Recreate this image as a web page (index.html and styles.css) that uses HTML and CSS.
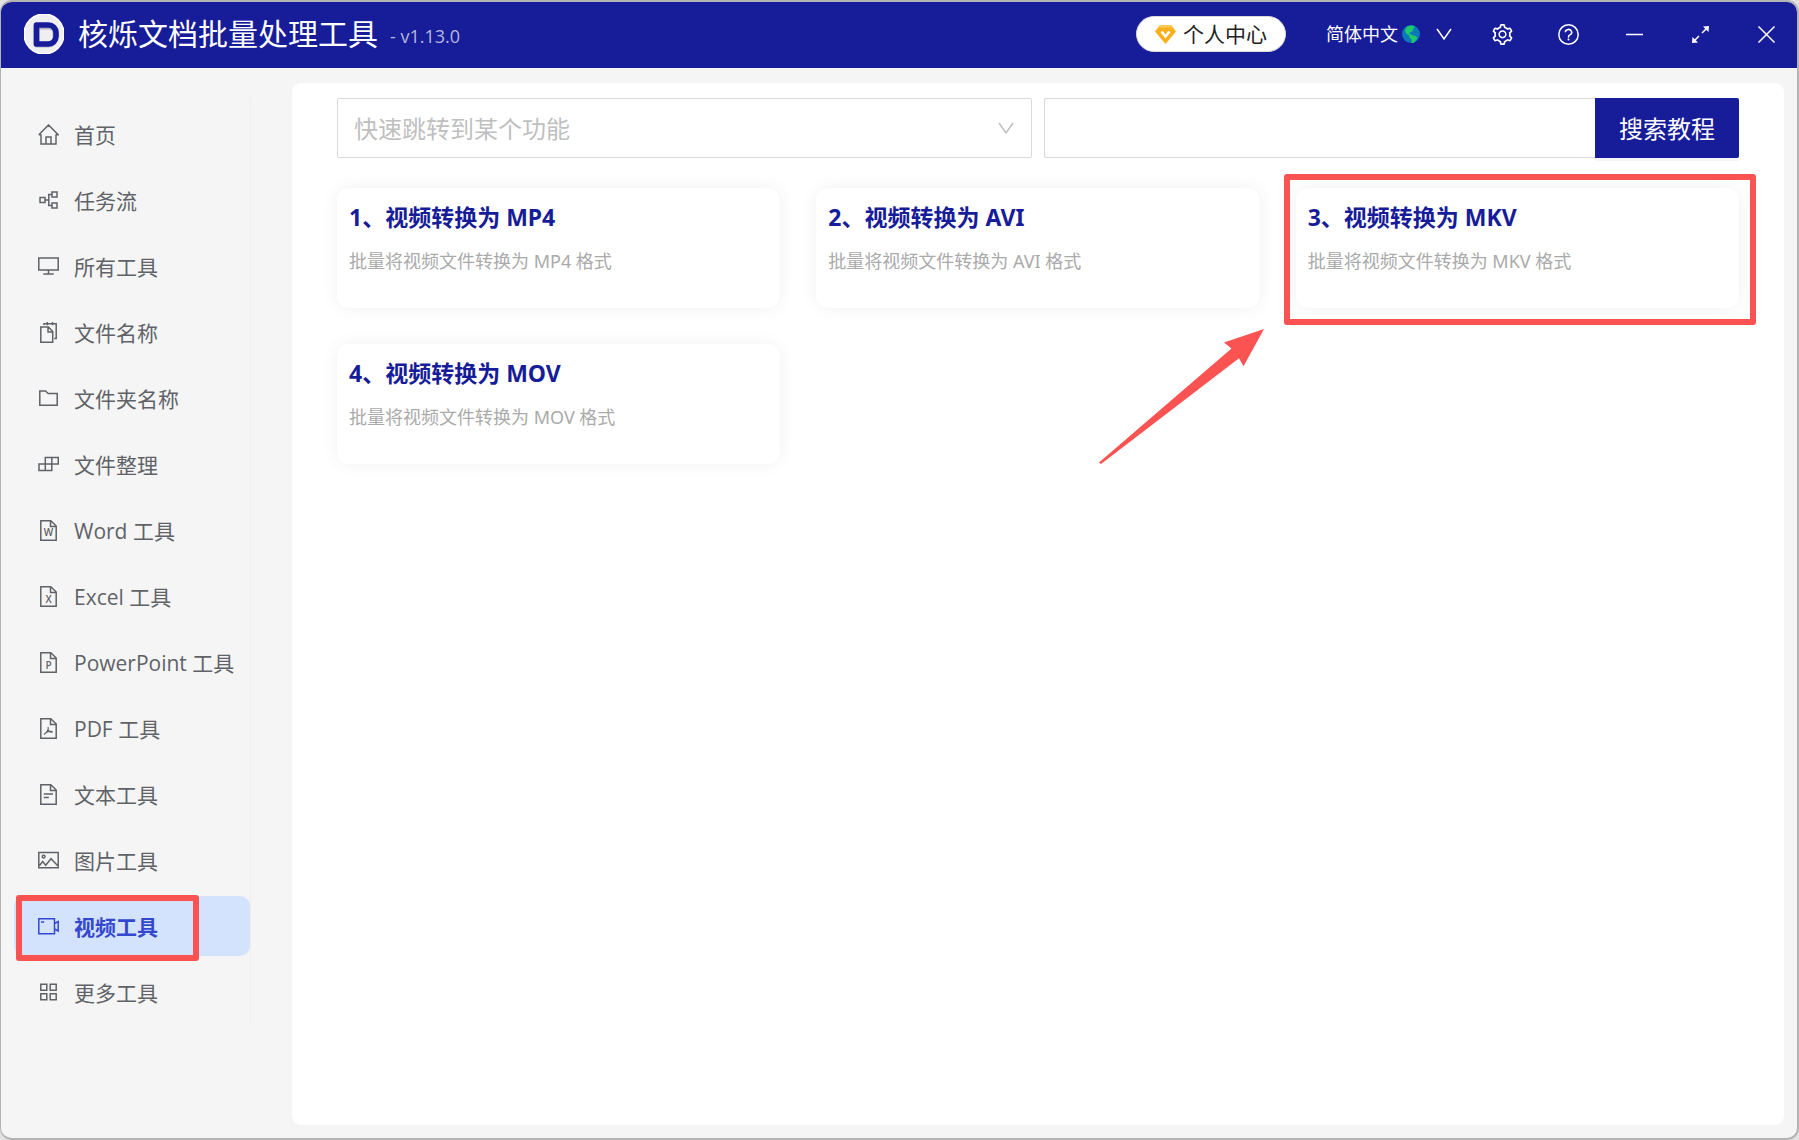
FILE: index.html
```html
<!DOCTYPE html>
<html lang="zh-CN">

<head>
    <meta charset="utf-8">
    <meta name="viewport" content="width=device-width, initial-scale=1">
    <title>核烁文档批量处理工具</title>
    <link rel="stylesheet" href="styles.css">
</head>

<body>
    <div class="window">
        <!-- 标题栏 -->
        <header class="titlebar">
            <svg class="logo" viewBox="0 0 40 40" aria-hidden="true">
                <circle cx="20" cy="20" r="20" fill="#efeff2" />
                <path d="M12.500 12.500h12a7 7 0 0 1 7 7v4a7 7 0 0 1-7 7h-12z" fill="none" stroke="#b4b4c0" stroke-width="6" stroke-linejoin="round" />
                <path d="M12.500 11h12a7.500 7.500 0 0 1 7.500 7.500v4a7.500 7.500 0 0 1-7.500 7.500h-12z" fill="none" stroke="#171c99" stroke-width="5.600" stroke-linejoin="round" />
            </svg>
            <h1 class="app-name">核烁文档批量处理工具</h1>
            <span class="version">- v1.13.0</span>

            <div class="tools">
                <button class="user-btn" type="button">
                    <svg width="21" height="19" viewBox="0 0 21 19" aria-hidden="true">
                        <path d="M5 0h11l5 6.500-10.500 12.500L0 6.500z" fill="#fbb01a" />
                        <path d="M5 0h11l2 2.500H3z" fill="#ffc85a" />
                        <path d="M6.500 6.500l4 5 4-5" fill="none" stroke="#fff" stroke-width="2.600" />
                    </svg>
                    个人中心
                </button>
                <button class="lang-btn" type="button">
                    简体中文
                    <svg class="globe" width="18" height="18" viewBox="0 0 18 18" aria-hidden="true">
                        <circle cx="9" cy="9" r="9" fill="#0b78b8" />
                        <path d="M5 1.500l4-1 3 .5.500 2-2 1.500.5 1.500-3 1.500-1 1 3 1.500 3.500 1 2 2-2 3-2.500 2.500-1.500-1 0-3-2-2-.5-2-3-2-1-3z" fill="#1fc96b" />
                    </svg>
                    <svg class="down" width="16" height="16" viewBox="0 0 16 16" aria-hidden="true">
                        <path d="M1 3l7 10 7-10" />
                    </svg>
                </button>
                <button class="icon-btn" type="button" aria-label="设置">
                    <svg viewBox="64 64 896 896">
                        <path class="solid" d="M924.8 625.7l-65.5-56c3.1-19 4.7-38.4 4.7-57.8s-1.6-38.8-4.7-57.8l65.5-56a32.03 32.03 0 009.3-35.2l-.9-2.6a443.74 443.74 0 00-79.7-137.9l-1.8-2.1a32.12 32.12 0 00-35.1-9.5l-81.3 28.9c-30-24.6-63.5-44-99.7-57.6l-15.7-85a32.05 32.05 0 00-25.8-25.7l-2.7-.5c-52.1-9.4-106.9-9.4-159 0l-2.7.5a32.05 32.05 0 00-25.8 25.7l-15.8 85.4a351.86 351.86 0 00-99 57.4l-81.9-29.1a32 32 0 00-35.1 9.5l-1.8 2.1a446.02 446.02 0 00-79.7 137.9l-.9 2.6c-4.5 12.5-.8 26.5 9.3 35.2l66.3 56.6c-3.1 18.8-4.6 38-4.6 57.1 0 19.2 1.5 38.4 4.6 57.1L99 625.5a32.03 32.03 0 00-9.3 35.2l.9 2.6c18.1 50.4 44.9 96.9 79.7 137.9l1.8 2.1a32.12 32.12 0 0035.1 9.5l81.9-29.1c29.8 24.5 63.1 43.9 99 57.4l15.8 85.4a32.05 32.05 0 0025.8 25.7l2.7.5a449.4 449.4 0 00159 0l2.7-.5a32.05 32.05 0 0025.8-25.7l15.7-85a350 350 0 0099.7-57.6l81.3 28.9a32 32 0 0035.1-9.5l1.8-2.1c34.8-41.1 61.6-87.5 79.7-137.9l.9-2.6c4.5-12.3.8-26.3-9.3-35zM788.3 465.9c2.5 15.1 3.8 30.6 3.8 46.1s-1.3 31-3.8 46.1l-6.6 40.1 74.7 63.9a370.03 370.03 0 01-42.6 73.6L721 702.8l-31.4 25.8c-23.9 19.6-50.5 35-79.3 45.800l-38.1 14.3-17.9 97a377.5 377.5 0 01-85 0l-17.9-97.2-37.8-14.5c-28.5-10.8-55-26.2-78.7-45.7l-31.4-25.9-93.4 33.2c-17-22.9-31.2-47.6-42.6-73.6l75.5-64.5-6.5-40c-2.4-14.9-3.7-30.3-3.7-45.5 0-15.3 1.2-30.6 3.7-45.5l6.5-40-75.5-64.5c11.3-26.1 25.6-50.7 42.6-73.6l93.4 33.2 31.4-25.9c23.7-19.5 50.2-34.9 78.7-45.7l37.9-14.3 17.9-97.2c28.1-3.2 56.8-3.2 85 0l17.9 97 38.1 14.3c28.7 10.8 55.4 26.2 79.3 45.8l31.4 25.8 92.8-32.9c17 22.9 31.2 47.6 42.6 73.6L781.8 426l6.5 39.9zM512 326c-97.2 0-176 78.8-176 176s78.8 176 176 176 176-78.8 176-176-78.8-176-176-176zm79.2 255.2A111.6 111.6 0 01512 614c-29.9 0-58-11.7-79.2-32.8A111.6 111.6 0 01400 502c0-29.9 11.7-58 32.8-79.2C454 401.6 482.1 390 512 390c29.9 0 58 11.6 79.2 32.8A111.6 111.6 0 01624 502c0 29.9-11.7 58-32.8 79.2z" />
                    </svg>
                </button>
                <button class="icon-btn" type="button" aria-label="帮助">
                    <svg viewBox="0 0 21 21">
                        <circle cx="10.500" cy="10.500" r="9.700" />
                        <path d="M7.300 8.300a3.200 2.900 0 1 1 4.600 2.600q-1.400.7-1.400 2v.8" />
                        <circle class="solid" cx="10.500" cy="15.500" r="1" />
                    </svg>
                </button>
                <button class="icon-btn" type="button" aria-label="最小化">
                    <svg viewBox="0 0 21 21">
                        <path d="M2 10.500h17" />
                    </svg>
                </button>
                <button class="icon-btn" type="button" aria-label="最大化">
                    <svg viewBox="0 0 21 21">
                        <path d="M12 9l5-5M9 12l-5 5" />
                        <path class="solid" d="M13 2.500l6-.5-.5 6zM8 18.500l-6 .5.5-6z" />
                    </svg>
                </button>
                <button class="icon-btn" type="button" aria-label="关闭">
                    <svg viewBox="0 0 21 21">
                        <path d="M2.500 2.500l16 16M18.500 2.500l-16 16" />
                    </svg>
                </button>
            </div>
        </header>

        <div class="main">
            <!-- 左侧菜单 -->
            <nav class="menu">
                <a class="menu-item" href="#home">
                    <svg viewBox="0 0 21 21"><path d="M3 11v9h15v-9M.8 10.700L10.500 1l9.700 9.700H17.500M.8 10.700H3.500M8 20v-7h5v7" /></svg>
                    首页
                </a>
                <a class="menu-item" href="#flow">
                    <svg viewBox="0 0 21 21"><path d="M2 7.500h5v5H2zM14 2h5v5h-5zM14 13h5v5h-5zM7 10h4M14 4.500h-3.200v11H14" /></svg>
                    任务流
                </a>
                <a class="menu-item" href="#all">
                    <svg viewBox="0 0 21 21"><path d="M.8 2h19.400v12H.8zM10.500 14v4M5.300 18h10.400" /></svg>
                    所有工具
                </a>
                <a class="menu-item" href="#filename">
                    <svg viewBox="0 0 21 21"><path d="M2.800 5h7.700l4.200 4.500v10.700H2.800zM10 5v5h4.700M6 3V1.800h12.200v14.700h-2M9.300 0v3.200M14.500 0v3.200" /></svg>
                    文件名称
                </a>
                <a class="menu-item" href="#folder">
                    <svg viewBox="0 0 21 21"><path d="M1.800 3h5.700l2.700 2.500h9v11.700H1.800z" /></svg>
                    文件夹名称
                </a>
                <a class="menu-item" href="#organize">
                    <svg viewBox="0 0 21 21"><path d="M1 10h12.800v6.500H1zM7.300 3.500h13V10h-13zM7.300 10v6.500M13.800 3.500V10" /></svg>
                    文件整理
                </a>
                <a class="menu-item" href="#word">
                    <svg viewBox="0 0 21 21"><path d="M2.800.8h10l5.400 5.200v14.200H2.800zM12.500.8v5.700h5.700" /><text x="10.500" y="16">W</text></svg>
                    Word 工具
                </a>
                <a class="menu-item" href="#excel">
                    <svg viewBox="0 0 21 21"><path d="M2.800.8h10l5.400 5.200v14.200H2.800zM12.500.8v5.700h5.700" /><text x="10.500" y="17">X</text></svg>
                    Excel 工具
                </a>
                <a class="menu-item" href="#powerpoint">
                    <svg viewBox="0 0 21 21"><path d="M2.800.8h10l5.400 5.200v14.200H2.800zM12.500.8v5.700h5.700" /><text x="10.500" y="17">P</text></svg>
                    PowerPoint 工具
                </a>
                <a class="menu-item" href="#pdf">
                    <svg viewBox="0 0 21 21"><path d="M2.800.8h10l5.400 5.200v14.200H2.800zM12.500.8v5.700h5.700" /><path class="thin" d="M9.800 9c1.200 1 .2 4.500-3.800 7.500M10 11.500c.8 2 2.500 3 4.800 2.500M7.500 15c1.500-1.200 4-1.800 6.800-1.500" /></svg>
                    PDF 工具
                </a>
                <a class="menu-item" href="#text">
                    <svg viewBox="0 0 21 21"><path d="M2.800.8h10l5.400 5.200v14.200H2.800zM12.500.8v5.700h5.700M5.800 10h9.200M5.800 13.500h5" /></svg>
                    文本工具
                </a>
                <a class="menu-item" href="#image">
                    <svg viewBox="0 0 21 21"><path d="M.8 2.500h19.400v15.200H.8zM1.500 15.500l3.200-4 3 3.700 5.300-6.500 6.500 6.800" /><circle cx="5.600" cy="6.700" r="1.400" /></svg>
                    图片工具
                </a>
                <a class="menu-item active" href="#video">
                    <svg viewBox="0 0 21 21"><path d="M.8 2.700h15.700v15H.8zM16.500 7.500l3.700-2v9.500l-3.700-2M3 6h3.200" /></svg>
                    视频工具
                    <span class="mark mark-menu"></span>
                </a>
                <a class="menu-item" href="#more">
                    <svg viewBox="0 0 21 21"><path d="M2.800 2.300h6v6h-6zM12.200 2.300h6v6h-6zM2.800 11.700h6v6h-6zM12.200 11.700h6v6h-6z" /></svg>
                    更多工具
                </a>
            </nav>

            <!-- 右侧内容 -->
            <main class="content">
                <div class="search-row">
                    <div class="jump">
                        <select class="jump-select" aria-label="快速跳转到某个功能">
                            <option>快速跳转到某个功能</option>
                        </select>
                        <svg class="down" width="16" height="16" viewBox="0 0 16 16" aria-hidden="true">
                            <path d="M1 3l7 10 7-10" />
                        </svg>
                    </div>
                    <form class="search">
                        <input class="search-input" type="text" aria-label="搜索教程">
                        <button class="search-btn" type="button">搜索教程</button>
                    </form>
                </div>

                <div class="cards">
                    <section class="card">
                        <h2>1、视频转换为 MP4</h2>
                        <p>批量将视频文件转换为 MP4 格式</p>
                    </section>
                    <section class="card">
                        <h2>2、视频转换为 AVI</h2>
                        <p>批量将视频文件转换为 AVI 格式</p>
                    </section>
                    <section class="card">
                        <h2>3、视频转换为 MKV</h2>
                        <p>批量将视频文件转换为 MKV 格式</p>
                        <span class="mark mark-card"></span>
                        <svg class="arrow" width="168" height="138" viewBox="0 0 168 138" aria-hidden="true">
                            <path d="M166 1L126 14.500l7.500 6L1 134.500l2 1.500L141 30.300l4.500 8z" />
                        </svg>
                    </section>
                    <section class="card">
                        <h2>4、视频转换为 MOV</h2>
                        <p>批量将视频文件转换为 MOV 格式</p>
                    </section>
                </div>
            </main>
        </div>
    </div>
</body>

</html>
```

FILE: styles.css
```css
* {
    box-sizing: border-box;
}

body {
    margin: 0;
    background: #e2e2e2;
    font-family: "Noto Sans", "Noto Sans CJK SC", sans-serif;
}

button,
input,
select {
    font-family: inherit;
    margin: 0;
}

svg {
    display: block;
    flex: none;
    fill: none;
    stroke: currentColor;
    stroke-width: 1.5;
}

svg .solid {
    fill: currentColor;
    stroke: none;
}

.window {
    display: flex;
    flex-direction: column;
    min-height: 100vh;
    border: 2px solid #b4b4b4;
    border-left-width: 1px;
    border-radius: 12px;
    overflow: hidden;
    background: #f5f5f5;
}

/* 标题栏 */
.titlebar {
    display: flex;
    align-items: center;
    height: 66px;
    padding: 0 20px 2px 23px;
    background: #171c99;
    color: #fff;
}

.logo {
    width: 40px;
    height: 40px;
}

.app-name {
    margin: 0 0 0 14px;
    font-size: 30px;
    font-weight: normal;
    line-height: 40px;
}

.version {
    margin: 4px 0 0 12px;
    font-family: "Open Sans", sans-serif;
    font-size: 18px;
    color: #b5b7de;
}

.tools {
    display: flex;
    align-items: center;
    margin-left: auto;
}

.user-btn {
    display: flex;
    align-items: center;
    gap: 7px;
    height: 36px;
    padding: 0 18px;
    border: 1px solid #d9d9d9;
    border-radius: 18px;
    background: #fff;
    color: #222;
    font-size: 21px;
    line-height: 30px;
}

.user-btn svg {
    stroke: none;
}

.lang-btn {
    display: flex;
    align-items: center;
    margin: 0 40px;
    padding: 0;
    border: 0;
    background: none;
    color: #fff;
    font-size: 18px;
    line-height: 30px;
}

.globe {
    margin: 0 16px 0 4px;
    stroke: none;
}

.icon-btn {
    padding: 0;
    border: 0;
    background: none;
    color: #fff;
}

.icon-btn + .icon-btn {
    margin-left: 45px;
}

.icon-btn svg {
    width: 21px;
    height: 21px;
}

.main {
    display: flex;
    flex: 1;
    padding: 15px 13px 13px;
}

/* 左侧菜单 */
.menu {
    display: flex;
    flex: none;
    flex-direction: column;
    align-self: flex-start;
    gap: 6px;
    width: 237px;
    margin-top: 15px;
    padding: 6px 0 3px;
    border-right: 1px solid #eee;
}

.menu-item {
    position: relative;
    display: flex;
    align-items: center;
    gap: 15px;
    height: 60px;
    padding-left: 24px;
    border-radius: 10px;
    color: #5f6368;
    font-family: "Open Sans", "Noto Sans CJK SC", sans-serif;
    font-size: 21px;
    text-decoration: none;
}

.menu-item svg {
    width: 21px;
    height: 21px;
}

.menu-item text {
    fill: currentColor;
    stroke: none;
    font-size: 10px;
    font-weight: 600;
    text-anchor: middle;
}

.menu-item .thin {
    stroke-width: 1.2;
}

.menu-item.active {
    background: #d3e3fd;
    color: #3448cf;
    font-weight: bold;
}

/* 红色标注 */
.mark {
    position: absolute;
    border: 6px solid #fb5352;
    border-radius: 3px;
    pointer-events: none;
}

.mark-menu {
    top: -1px;
    left: 2px;
    width: 183px;
    height: 66px;
}

.mark-card {
    top: -14px;
    right: -17px;
    bottom: -17px;
    left: -12px;
}

.arrow {
    position: absolute;
    top: 140px;
    left: -198px;
    fill: #fb5352;
    stroke: none;
}

/* 右侧内容 */
.content {
    flex: 1;
    min-width: 0;
    margin-left: 41px;
    padding: 15px 45px;
    border-radius: 9px;
    background: #fff;
}

.search-row {
    display: grid;
    grid-template-columns: 1fr 1fr;
    gap: 12px;
}

.jump {
    position: relative;
}

.jump-select {
    display: block;
    width: 100%;
    height: 60px;
    padding: 0 48px 0 16px;
    border: 1px solid #d9d9d9;
    border-radius: 2px;
    appearance: none;
    background: #fff;
    color: #bfbfbf;
    font-size: 24px;
}

.jump .down {
    position: absolute;
    top: 22px;
    right: 18px;
    color: #bfbfbf;
    pointer-events: none;
}

.search {
    display: flex;
}

.search-input {
    flex: 1;
    min-width: 0;
    height: 60px;
    padding: 0 16px;
    border: 1px solid #d9d9d9;
    border-right: 0;
    border-radius: 2px 0 0 2px;
    font-size: 24px;
}

.search-btn {
    width: 144px;
    height: 60px;
    padding: 0 0 2px;
    border: 0;
    border-radius: 0 2px 2px 0;
    background: #171c99;
    box-shadow: 0 3px 0 rgba(0, 0, 0, 0.04);
    color: #fff;
    font-size: 24px;
}

.cards {
    display: grid;
    grid-template-columns: repeat(3, 1fr);
    gap: 36px;
    margin-top: 30px;
}

.card {
    position: relative;
    min-height: 120px;
    padding: 12px;
    border-radius: 12px;
    background: #fff;
    box-shadow: 0 0 18px rgba(0, 0, 0, 0.06);
}

.card h2 {
    margin: 0;
    color: #171c99;
    font-size: 23px;
    line-height: 35px;
}

.card p {
    margin: 13px 0 0;
    color: #aaa;
    font-size: 18px;
    line-height: 27px;
}
```
